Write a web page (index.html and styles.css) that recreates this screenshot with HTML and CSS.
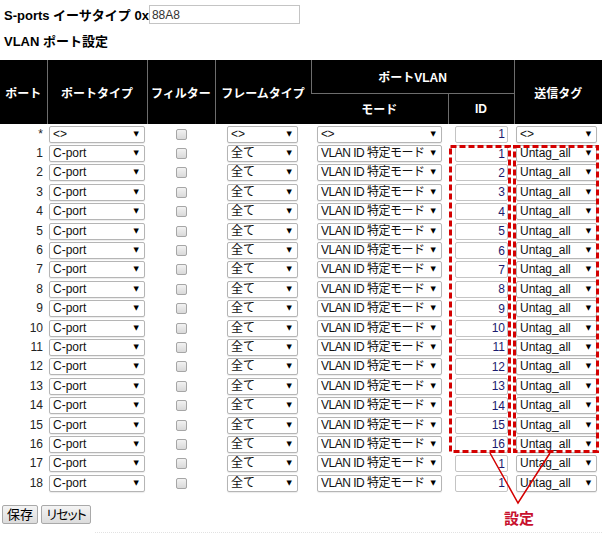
FILE: index.html
```html
<!DOCTYPE html>
<html lang="ja">
<head>
    <meta charset="UTF-8">
    <title>VLAN ポート設定</title>
    <link rel="stylesheet" href="styles.css">
</head>
<body>
<div class="page">
    <!-- Ether type -->
    <div class="ethertype">
        <label for="etherType">S-ports イーサタイプ 0x</label>
        <input type="text" id="etherType" value="88A8">
    </div>

    <h2 class="section">VLAN ポート設定</h2>

    <table class="ports">
        <colgroup>
            <col style="width:47px"><col style="width:100px"><col style="width:68px"><col style="width:96px">
            <col style="width:137px"><col style="width:66px"><col style="width:88px">
        </colgroup>
        <thead>
            <tr class="top">
                <th rowspan="2">ポート</th>
                <th rowspan="2">ポートタイプ</th>
                <th rowspan="2">フィルター</th>
                <th rowspan="2">フレームタイプ</th>
                <th colspan="2">ポートVLAN</th>
                <th rowspan="2">送信タグ</th>
            </tr>
            <tr class="sub">
                <th>モード</th>
                <th>ID</th>
            </tr>
        </thead>
        <tbody>
            <tr>
                <td class="num">*</td>
                <td class="c-type"><span class="sel"><select><option>&lt;&gt;</option></select></span></td>
                <td class="c-filter"><input type="checkbox"></td>
                <td class="c-frame"><span class="sel"><select><option>&lt;&gt;</option></select></span></td>
                <td class="c-mode"><span class="sel"><select><option>&lt;&gt;</option></select></span></td>
                <td class="c-id"><input type="text" value="1"></td>
                <td class="c-tag"><span class="sel"><select><option>&lt;&gt;</option></select></span></td>
            </tr>
            <tr>
                <td class="num">1</td>
                <td class="c-type"><span class="sel"><select><option>C-port</option></select></span></td>
                <td class="c-filter"><input type="checkbox"></td>
                <td class="c-frame"><span class="sel"><select><option>全て</option></select></span></td>
                <td class="c-mode"><span class="sel"><select><option>VLAN ID 特定モード</option></select></span></td>
                <td class="c-id"><input type="text" value="1"></td>
                <td class="c-tag"><span class="sel"><select><option>Untag_all</option></select></span></td>
            </tr>
            <tr>
                <td class="num">2</td>
                <td class="c-type"><span class="sel"><select><option>C-port</option></select></span></td>
                <td class="c-filter"><input type="checkbox"></td>
                <td class="c-frame"><span class="sel"><select><option>全て</option></select></span></td>
                <td class="c-mode"><span class="sel"><select><option>VLAN ID 特定モード</option></select></span></td>
                <td class="c-id"><input type="text" value="2"></td>
                <td class="c-tag"><span class="sel"><select><option>Untag_all</option></select></span></td>
            </tr>
            <tr>
                <td class="num">3</td>
                <td class="c-type"><span class="sel"><select><option>C-port</option></select></span></td>
                <td class="c-filter"><input type="checkbox"></td>
                <td class="c-frame"><span class="sel"><select><option>全て</option></select></span></td>
                <td class="c-mode"><span class="sel"><select><option>VLAN ID 特定モード</option></select></span></td>
                <td class="c-id"><input type="text" value="3"></td>
                <td class="c-tag"><span class="sel"><select><option>Untag_all</option></select></span></td>
            </tr>
            <tr>
                <td class="num">4</td>
                <td class="c-type"><span class="sel"><select><option>C-port</option></select></span></td>
                <td class="c-filter"><input type="checkbox"></td>
                <td class="c-frame"><span class="sel"><select><option>全て</option></select></span></td>
                <td class="c-mode"><span class="sel"><select><option>VLAN ID 特定モード</option></select></span></td>
                <td class="c-id"><input type="text" value="4"></td>
                <td class="c-tag"><span class="sel"><select><option>Untag_all</option></select></span></td>
            </tr>
            <tr>
                <td class="num">5</td>
                <td class="c-type"><span class="sel"><select><option>C-port</option></select></span></td>
                <td class="c-filter"><input type="checkbox"></td>
                <td class="c-frame"><span class="sel"><select><option>全て</option></select></span></td>
                <td class="c-mode"><span class="sel"><select><option>VLAN ID 特定モード</option></select></span></td>
                <td class="c-id"><input type="text" value="5"></td>
                <td class="c-tag"><span class="sel"><select><option>Untag_all</option></select></span></td>
            </tr>
            <tr>
                <td class="num">6</td>
                <td class="c-type"><span class="sel"><select><option>C-port</option></select></span></td>
                <td class="c-filter"><input type="checkbox"></td>
                <td class="c-frame"><span class="sel"><select><option>全て</option></select></span></td>
                <td class="c-mode"><span class="sel"><select><option>VLAN ID 特定モード</option></select></span></td>
                <td class="c-id"><input type="text" value="6"></td>
                <td class="c-tag"><span class="sel"><select><option>Untag_all</option></select></span></td>
            </tr>
            <tr>
                <td class="num">7</td>
                <td class="c-type"><span class="sel"><select><option>C-port</option></select></span></td>
                <td class="c-filter"><input type="checkbox"></td>
                <td class="c-frame"><span class="sel"><select><option>全て</option></select></span></td>
                <td class="c-mode"><span class="sel"><select><option>VLAN ID 特定モード</option></select></span></td>
                <td class="c-id"><input type="text" value="7"></td>
                <td class="c-tag"><span class="sel"><select><option>Untag_all</option></select></span></td>
            </tr>
            <tr>
                <td class="num">8</td>
                <td class="c-type"><span class="sel"><select><option>C-port</option></select></span></td>
                <td class="c-filter"><input type="checkbox"></td>
                <td class="c-frame"><span class="sel"><select><option>全て</option></select></span></td>
                <td class="c-mode"><span class="sel"><select><option>VLAN ID 特定モード</option></select></span></td>
                <td class="c-id"><input type="text" value="8"></td>
                <td class="c-tag"><span class="sel"><select><option>Untag_all</option></select></span></td>
            </tr>
            <tr>
                <td class="num">9</td>
                <td class="c-type"><span class="sel"><select><option>C-port</option></select></span></td>
                <td class="c-filter"><input type="checkbox"></td>
                <td class="c-frame"><span class="sel"><select><option>全て</option></select></span></td>
                <td class="c-mode"><span class="sel"><select><option>VLAN ID 特定モード</option></select></span></td>
                <td class="c-id"><input type="text" value="9"></td>
                <td class="c-tag"><span class="sel"><select><option>Untag_all</option></select></span></td>
            </tr>
            <tr>
                <td class="num">10</td>
                <td class="c-type"><span class="sel"><select><option>C-port</option></select></span></td>
                <td class="c-filter"><input type="checkbox"></td>
                <td class="c-frame"><span class="sel"><select><option>全て</option></select></span></td>
                <td class="c-mode"><span class="sel"><select><option>VLAN ID 特定モード</option></select></span></td>
                <td class="c-id"><input type="text" value="10"></td>
                <td class="c-tag"><span class="sel"><select><option>Untag_all</option></select></span></td>
            </tr>
            <tr>
                <td class="num">11</td>
                <td class="c-type"><span class="sel"><select><option>C-port</option></select></span></td>
                <td class="c-filter"><input type="checkbox"></td>
                <td class="c-frame"><span class="sel"><select><option>全て</option></select></span></td>
                <td class="c-mode"><span class="sel"><select><option>VLAN ID 特定モード</option></select></span></td>
                <td class="c-id"><input type="text" value="11"></td>
                <td class="c-tag"><span class="sel"><select><option>Untag_all</option></select></span></td>
            </tr>
            <tr>
                <td class="num">12</td>
                <td class="c-type"><span class="sel"><select><option>C-port</option></select></span></td>
                <td class="c-filter"><input type="checkbox"></td>
                <td class="c-frame"><span class="sel"><select><option>全て</option></select></span></td>
                <td class="c-mode"><span class="sel"><select><option>VLAN ID 特定モード</option></select></span></td>
                <td class="c-id"><input type="text" value="12"></td>
                <td class="c-tag"><span class="sel"><select><option>Untag_all</option></select></span></td>
            </tr>
            <tr>
                <td class="num">13</td>
                <td class="c-type"><span class="sel"><select><option>C-port</option></select></span></td>
                <td class="c-filter"><input type="checkbox"></td>
                <td class="c-frame"><span class="sel"><select><option>全て</option></select></span></td>
                <td class="c-mode"><span class="sel"><select><option>VLAN ID 特定モード</option></select></span></td>
                <td class="c-id"><input type="text" value="13"></td>
                <td class="c-tag"><span class="sel"><select><option>Untag_all</option></select></span></td>
            </tr>
            <tr>
                <td class="num">14</td>
                <td class="c-type"><span class="sel"><select><option>C-port</option></select></span></td>
                <td class="c-filter"><input type="checkbox"></td>
                <td class="c-frame"><span class="sel"><select><option>全て</option></select></span></td>
                <td class="c-mode"><span class="sel"><select><option>VLAN ID 特定モード</option></select></span></td>
                <td class="c-id"><input type="text" value="14"></td>
                <td class="c-tag"><span class="sel"><select><option>Untag_all</option></select></span></td>
            </tr>
            <tr>
                <td class="num">15</td>
                <td class="c-type"><span class="sel"><select><option>C-port</option></select></span></td>
                <td class="c-filter"><input type="checkbox"></td>
                <td class="c-frame"><span class="sel"><select><option>全て</option></select></span></td>
                <td class="c-mode"><span class="sel"><select><option>VLAN ID 特定モード</option></select></span></td>
                <td class="c-id"><input type="text" value="15"></td>
                <td class="c-tag"><span class="sel"><select><option>Untag_all</option></select></span></td>
            </tr>
            <tr>
                <td class="num">16</td>
                <td class="c-type"><span class="sel"><select><option>C-port</option></select></span></td>
                <td class="c-filter"><input type="checkbox"></td>
                <td class="c-frame"><span class="sel"><select><option>全て</option></select></span></td>
                <td class="c-mode"><span class="sel"><select><option>VLAN ID 特定モード</option></select></span></td>
                <td class="c-id"><input type="text" value="16"></td>
                <td class="c-tag"><span class="sel"><select><option>Untag_all</option></select></span></td>
            </tr>
            <tr>
                <td class="num">17</td>
                <td class="c-type"><span class="sel"><select><option>C-port</option></select></span></td>
                <td class="c-filter"><input type="checkbox"></td>
                <td class="c-frame"><span class="sel"><select><option>全て</option></select></span></td>
                <td class="c-mode"><span class="sel"><select><option>VLAN ID 特定モード</option></select></span></td>
                <td class="c-id"><input type="text" value="1"></td>
                <td class="c-tag"><span class="sel"><select><option>Untag_all</option></select></span></td>
            </tr>
            <tr>
                <td class="num">18</td>
                <td class="c-type"><span class="sel"><select><option>C-port</option></select></span></td>
                <td class="c-filter"><input type="checkbox"></td>
                <td class="c-frame"><span class="sel"><select><option>全て</option></select></span></td>
                <td class="c-mode"><span class="sel"><select><option>VLAN ID 特定モード</option></select></span></td>
                <td class="c-id"><input type="text" value="1"></td>
                <td class="c-tag"><span class="sel"><select><option>Untag_all</option></select></span></td>
            </tr>
        </tbody>
    </table>

    <div class="actions">
        <button type="button" class="btn-save">保存</button>
        <button type="button" class="btn-reset">リセット</button>
    </div>
    <div class="footer-line"></div>

    <!-- Annotation drawn over the ID / tag columns -->
    <svg class="callout" width="602" height="537" viewBox="0 0 602 537">
        <rect x="450.5" y="146.5" width="59" height="305" fill="none" stroke="#d40000" stroke-width="3" stroke-dasharray="6 3"/>
        <rect x="514.5" y="146.5" width="83" height="305" fill="none" stroke="#d40000" stroke-width="3" stroke-dasharray="6 3"/>
        <polyline points="490,453 518,503 550,453" fill="none" stroke="#d40000" stroke-width="1.5"/>
        <text x="519" y="524" text-anchor="middle">設定</text>
    </svg>
</div>
</body>
</html>
```

FILE: styles.css
```css
/* Port VLAN settings page */
body {
  margin: 0;
  font-family: "Liberation Sans", "Noto Sans CJK JP", sans-serif;
  font-size: 12px;
  color: #000;
  background-color: #fff;
}
.page {
  position: relative;
  width: 602px;
  height: 537px;
  overflow: hidden;
}
.ethertype {
  display: flex;
  align-items: center;
  padding: 5px 0 0 4px;
  font-size: 13px;
  font-weight: bold;
}
.ethertype input {
  width: 151px;
  height: 19px;
  box-sizing: border-box;
  margin: 0;
  padding: 0 2px;
  border: 1px solid #c4c4c4;
  font-family: inherit;
  font-size: 12px;
  color: #333;
}
.section {
  margin: 10px 0 10px 4px;
  font-size: 13px;
  line-height: 16px;
  font-weight: bold;
}

/* Table */
.ports {
  width: 602px;
  border-collapse: collapse;
  table-layout: fixed;
}
.ports th {
  background-color: #000;
  color: #fff;
  font-size: 12px;
  font-weight: bold;
  padding: 0;
  border-left: 1px solid #6d6d6d;
  text-align: center;
}
.ports th:first-child {
  border-left: none;
}
.ports tr.top {
  height: 33px;
}
.ports tr.sub {
  height: 31px;
}
.ports tr.sub th {
  border-top: 1px solid #6d6d6d;
}
.ports td {
  height: 19.4px;
  padding: 0;
  vertical-align: middle;
  white-space: nowrap;
}
.ports td.num {
  text-align: right;
  padding-right: 4px;
  font-size: 12px;
  color: #222;
}
.c-type { padding-left: 2px !important; }
.c-filter { text-align: center; }
.c-frame { padding-left: 12px !important; }
.c-mode { padding-left: 6px !important; }
.c-id { padding-left: 7px !important; }
.c-tag { padding-left: 2px !important; }

/* Select boxes with a small black arrow */
.sel {
  position: relative;
  display: inline-block;
  vertical-align: middle;
}
.sel select {
  appearance: none;
  -webkit-appearance: none;
  display: block;
  height: 17px;
  box-sizing: border-box;
  margin: 1px 0 0;
  padding: 0 14px 0 3px;
  border: 1px solid #b5b5b5;
  border-radius: 2px;
  background: #fff;
  font-family: inherit;
  font-size: 12px;
  line-height: 15px;
  color: #111;
  box-shadow: 0 1px 1px rgba(0,0,0,0.08);
}
.sel::after {
  content: "▼";
  position: absolute;
  right: 6px;
  top: 5px;
  font-family: "DejaVu Sans", sans-serif;
  font-size: 7px;
  line-height: 8px;
  color: #000;
  pointer-events: none;
}
.c-type select { width: 96px; }
.c-frame select { width: 71px; }
.c-mode select { width: 125px; letter-spacing: -0.5px; }
.c-tag select { width: 81px; }

.c-id input {
  display: block;
  width: 53px;
  height: 17px;
  box-sizing: border-box;
  margin: 1px 0 0;
  padding: 0 2px;
  border: 1px solid #c4c4c4;
  border-radius: 2px;
  font-family: inherit;
  font-size: 12px;
  text-align: right;
  color: #1b1b6e;
}
.c-filter input {
  appearance: none;
  -webkit-appearance: none;
  display: block;
  margin: 1px auto 0;
  width: 11px;
  height: 11px;
  border: 1px solid #a6a6a6;
  border-radius: 2px;
  background: linear-gradient(#f2f2f2, #d9d9d9);
}

/* Buttons */
.actions {
  display: flex;
  gap: 3px;
  margin: 13px 0 0 2px;
}
.actions button {
  height: 19px;
  padding: 0;
  border: 1px solid #a9a9a9;
  border-radius: 2px;
  background: linear-gradient(#f4f4f4, #dcdcdc);
  font-family: inherit;
  font-size: 13px;
  line-height: 17px;
  color: #000;
  font-feature-settings: "palt";
}
.btn-save {
  width: 36px;
}
.btn-reset {
  width: 50px;
  letter-spacing: -1px;
}
.footer-line {
  margin: 8px 0 0 95px;
  border-top: 1px dotted #e2e2e2;
}

/* Red annotation */
.callout {
  position: absolute;
  left: 0;
  top: 0;
  pointer-events: none;
}
.callout text {
  font-family: "Noto Sans CJK JP", sans-serif;
  font-size: 15px;
  font-weight: bold;
  fill: #c8102e;
}
```
